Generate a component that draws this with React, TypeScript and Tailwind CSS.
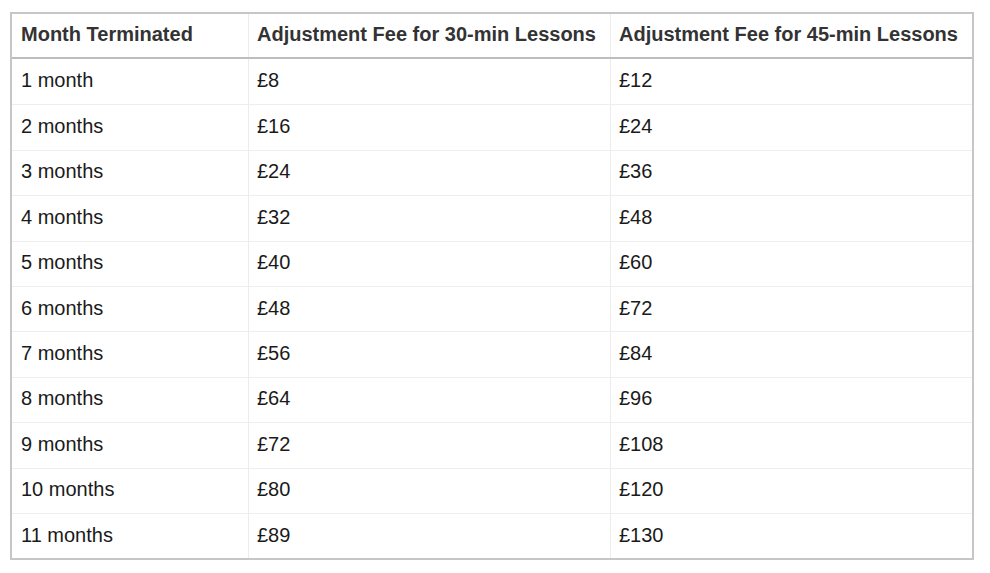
import React from "react";

const rows: [string, string, string][] = [
  ["1 month", "£8", "£12"],
  ["2 months", "£16", "£24"],
  ["3 months", "£24", "£36"],
  ["4 months", "£32", "£48"],
  ["5 months", "£40", "£60"],
  ["6 months", "£48", "£72"],
  ["7 months", "£56", "£84"],
  ["8 months", "£64", "£96"],
  ["9 months", "£72", "£108"],
  ["10 months", "£80", "£120"],
  ["11 months", "£89", "£130"],
];

export default function App() {
  return (
    <div
      className="w-[990px] h-[573px] bg-white pt-[12px] pl-[10px]"
      style={{ fontFamily: '"Liberation Sans", Arial, sans-serif' }}
    >
      <div className="w-[964px] border-2 border-[#c6c6c6] text-[20px]">
        <div className="flex h-[45px] border-b-2 border-[#bdbdbd] font-bold text-[#333333]">
          <div className="w-[236px] flex items-center pl-[9px] pb-[3px]">Month Terminated</div>
          <div className="w-[362px] flex items-center pl-[8px] pb-[3px] border-l border-[#ececec]">
            Adjustment Fee for 30-min Lessons
          </div>
          <div className="flex-1 flex items-center pl-[8px] pb-[3px] border-l border-[#ececec]">
            Adjustment Fee for 45-min Lessons
          </div>
        </div>
        {rows.map((r, i) => (
          <div
            key={i}
            className={
              "flex h-[45.4px] text-[#1a1a1a] " + (i > 0 ? "border-t border-[#eeeeee]" : "")
            }
          >
            <div className="w-[236px] flex items-center pl-[9px] pb-[3px]">{r[0]}</div>
            <div className="w-[362px] flex items-center pl-[8px] pb-[3px] border-l border-[#ececec]">{r[1]}</div>
            <div className="flex-1 flex items-center pl-[8px] pb-[3px] border-l border-[#ececec]">{r[2]}</div>
          </div>
        ))}
      </div>
    </div>
  );
}
